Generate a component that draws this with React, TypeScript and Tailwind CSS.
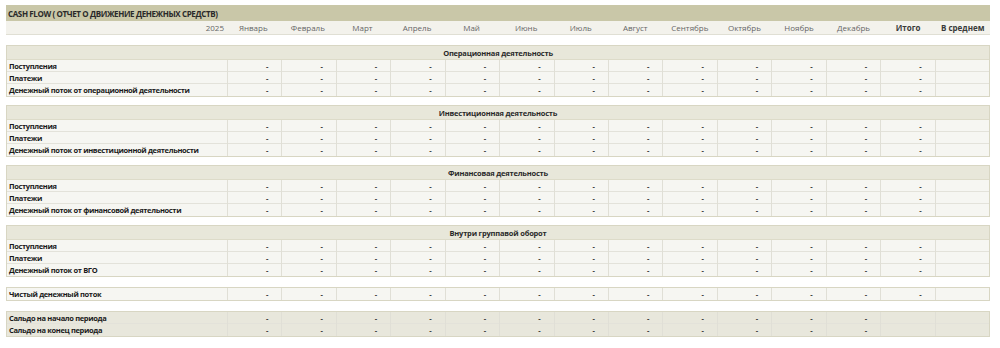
const MONTHS = ["Январь", "Февраль", "Март", "Апрель", "Май", "Июнь", "Июль", "Август", "Сентябрь", "Октябрь", "Ноябрь", "Декабрь"];

const SECTIONS = [
  { title: "Операционная деятельность", total: "Денежный поток от операционной деятельности" },
  { title: "Инвестиционная деятельность", total: "Денежный поток от инвестиционной деятельности" },
  { title: "Финансовая деятельность", total: "Денежный поток от финансовой деятельности" },
  { title: "Внутри группавой оборот", total: "Денежный поток от ВГО" },
];

const grid = "grid grid-cols-[220px_repeat(14,minmax(0,1fr))]";

function Row({ label, totalDash = true, shade = false }: { label: string; totalDash?: boolean; shade?: boolean }) {
  // 12 months, then Итого, then В среднем (always empty)
  const cells = [...MONTHS.map(() => "-"), totalDash ? "-" : "", ""];
  return (
    <div className={`${grid} h-[12px] leading-[12px] ${shade ? "bg-[#e8e7dc]" : "bg-[#f6f6f2]"} border-b border-[#e3e2da] last:border-b-0`}>
      <div className="pl-[2px] font-bold text-[#1a1a1a] tracking-[-0.35px] truncate">{label}</div>
      {cells.map((c, i) => (
        <div key={i} className="border-l border-[#e0dfd6] text-right pr-[13px] text-[#333] font-bold">{c}</div>
      ))}
    </div>
  );
}

export default function App() {
  return (
    <div className="w-[1000px] h-[348px] bg-white pt-[5px] px-[6px] text-[7.5px] text-[#333]" style={{ fontFamily: '"Open Sans", "DejaVu Sans", sans-serif' }}>
      <div className="w-[984px]">
        <div className="h-[16px] bg-[#c9c7a8] leading-[17px] pl-[2px] font-bold text-[#2a2a2a] text-[8px] tracking-[-0.38px]">
          CASH FLOW ( ОТЧЕТ О ДВИЖЕНИЕ ДЕНЕЖНЫХ СРЕДСТВ)
        </div>
        <div className={`${grid} h-[14px] leading-[14px] bg-[#f3f2ec] border-b border-[#e0dfd4] text-[8px]`}>
          <div className="text-right pr-[2px] text-[#666]">2025</div>
          {MONTHS.map((m) => (
            <div key={m} className="text-center text-[#666]">{m}</div>
          ))}
          <div className="text-center font-bold text-[#3a3a3a]">Итого</div>
          <div className="text-center font-bold text-[#3a3a3a]">В среднем</div>
        </div>

        <div className="mt-[10px] flex flex-col gap-[8px]">
          {SECTIONS.map((s) => (
            <div key={s.title} className="border border-[#d8d6c3]">
              <div className="h-[14px] leading-[14px] bg-[#e8e7da] border-b border-[#dddbc9] text-center font-bold text-[#2a2a2a] tracking-[-0.2px]">{s.title}</div>
              <Row label="Поступления" />
              <Row label="Платежи" />
              <Row label={s.total} />
            </div>
          ))}
        </div>

        <div className="mt-[10px] border border-[#d8d6c3]">
          <Row label="Чистый денежный поток" />
        </div>

        <div className="mt-[10px] border border-[#d8d6c3]">
          <Row label="Сальдо на начало периода" shade totalDash={false} />
          <Row label="Сальдо на конец периода" shade totalDash={false} />
        </div>
      </div>
    </div>
  );
}
